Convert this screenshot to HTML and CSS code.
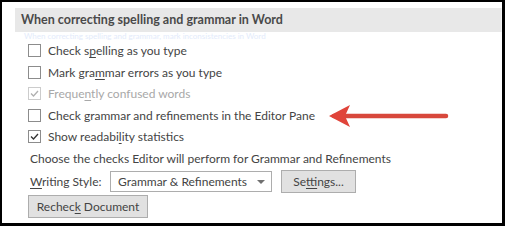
FILE: index.html
```html
<!DOCTYPE html>
<html>
<head>
<meta charset="utf-8">
<link rel="stylesheet" href="styles.css">
</head>
<body>
<div class="frame">
  <div class="header">When correcting spelling and grammar in Word</div>
  <div class="ghost">When correcting spelling and grammar, mark inconsistencies in Word</div>
  <div class="options">
    <div class="row"><span class="box"></span><span class="label">Check s<u>p</u>elling as you type</span></div>
    <div class="row"><span class="box"></span><span class="label">Mark gra<u>m</u>mar errors as you type</span></div>
    <div class="row disabled"><span class="box checked"><svg viewBox="0 0 13 13" width="13" height="13"><path d="M3 6.5 L5.5 9 L10 4" fill="none" stroke="#b0b0b0" stroke-width="1.3"/></svg></span><span class="label">Freque<u>n</u>tly confused words</span></div>
    <div class="row arrow-row"><span class="box"></span><span class="label">Check grammar and refinements in the Editor Pane</span>
      <svg class="arrow" viewBox="0 0 122 26" width="122" height="26"><path d="M6 13 L118 13" stroke="#d8483c" stroke-width="4.5" stroke-linecap="round"/><path d="M1 13 L22 2 L17 13 L22 24 Z" fill="#e0443a"/></svg>
    </div>
    <div class="row"><span class="box checked"><svg viewBox="0 0 13 13" width="13" height="13"><path d="M3 6.5 L5.5 9 L10 4" fill="none" stroke="#333" stroke-width="1.3"/></svg></span><span class="label">Show readabi<u>l</u>ity statistics</span></div>
  </div>
  <div class="choose">Choose the checks Editor will perform for Grammar and Refinements</div>
  <div class="style-row">
    <span class="style-label"><u>W</u>riting Style:</span>
    <span class="select">Grammar &amp; Refinements<span class="caret"></span></span>
    <span class="btn settings">Se<u>t</u>tings...</span>
  </div>
  <div class="recheck-row"><span class="btn recheck">Rechec<u>k</u> Document</span></div>
</div>
</body>
</html>
```
FILE: styles.css
```css
html, body { margin: 0; padding: 0; background: #000; }
body { font-family: Lato, "Noto Sans", sans-serif; font-size: 12px; color: #444; }
.frame {
  box-sizing: border-box;
  width: 505px; height: 226px;
  border-style: solid; border-color: #000;
  border-width: 2px 3px 3px 2px;
  background: #fff;
  position: relative;
  overflow: hidden;
}
.header {
  margin: 6px 0 0 13px;
  height: 24px;
  line-height: 24px;
  background: #e8e8e8;
  border-right: 1px solid #f2f2f2;
  padding-left: 6px;
  font-weight: bold;
  font-size: 12.5px;
  color: #4a4a4a;
}
.ghost {
  height: 8px;
  line-height: 8px;
  font-size: 8px;
  padding-left: 22px;
  color: #e3ebfb;
  white-space: nowrap;
}
.row {
  display: flex; align-items: center;
  height: 21.5px;
  padding-left: 26px;
  position: relative;
}
.box {
  box-sizing: border-box;
  width: 13px; height: 13px;
  border: 1px solid #8c8c8c;
  background: #fff;
  flex: none;
  display: flex;
}
.box svg { margin: -1px; }
.label { margin-left: 7px; white-space: nowrap; }
u { text-decoration-thickness: 1px; text-underline-offset: 2px; }
.disabled .box { border-color: #cccccc; }
.disabled .label { color: #a8a8a8; }
.arrow { position: absolute; left: 326px; top: -2px; }
.choose { padding-left: 28px; height: 22px; line-height: 22px; white-space: nowrap; }
.style-row { display: flex; align-items: center; padding-left: 28px; height: 23px; }
.style-label { width: 80px; }
.select {
  box-sizing: border-box;
  width: 162px; height: 21px;
  border: 1px solid #adadad;
  padding-left: 7px;
  line-height: 19px;
  position: relative;
  background: #fff;
}
.caret {
  position: absolute; right: 6px; top: 8px;
  width: 0; height: 0;
  border-left: 4px solid transparent;
  border-right: 4px solid transparent;
  border-top: 4px solid #707070;
}
.btn {
  box-sizing: border-box;
  display: inline-block;
  background: #e1e1e1;
  border: 1px solid #adadad;
  text-align: center;
}
.settings { margin-left: 9px; width: 75px; height: 23px; line-height: 21px; }
.recheck-row { padding-left: 26px; margin-top: 2px; }
.recheck { width: 120px; height: 23px; line-height: 21px; }
```
